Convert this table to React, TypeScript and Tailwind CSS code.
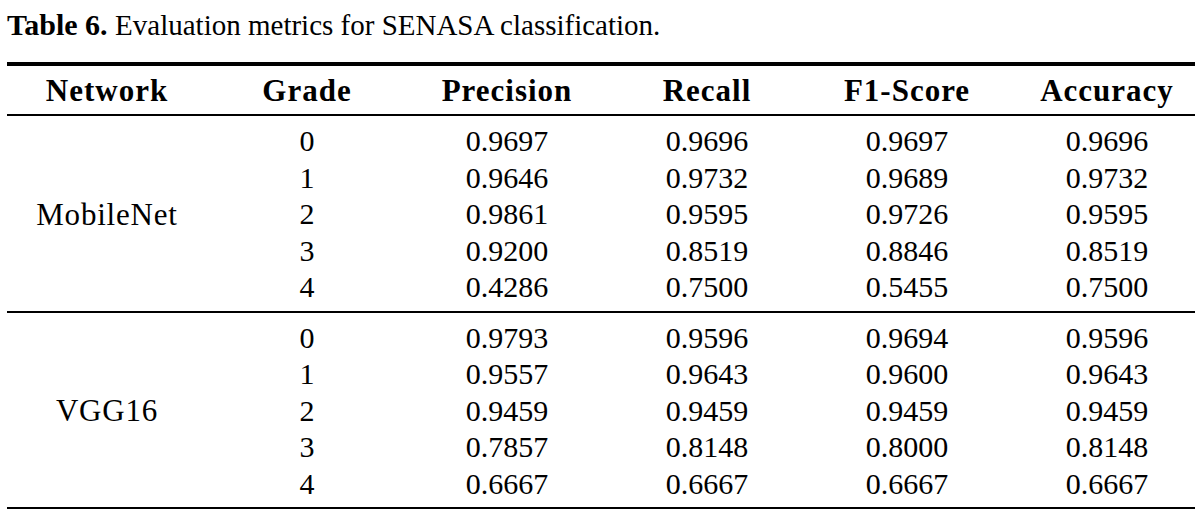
const rows = {
  MobileNet: [
    ['0', '0.9697', '0.9696', '0.9697', '0.9696'],
    ['1', '0.9646', '0.9732', '0.9689', '0.9732'],
    ['2', '0.9861', '0.9595', '0.9726', '0.9595'],
    ['3', '0.9200', '0.8519', '0.8846', '0.8519'],
    ['4', '0.4286', '0.7500', '0.5455', '0.7500'],
  ],
  VGG16: [
    ['0', '0.9793', '0.9596', '0.9694', '0.9596'],
    ['1', '0.9557', '0.9643', '0.9600', '0.9643'],
    ['2', '0.9459', '0.9459', '0.9459', '0.9459'],
    ['3', '0.7857', '0.8148', '0.8000', '0.8148'],
    ['4', '0.6667', '0.6667', '0.6667', '0.6667'],
  ],
};

const headers = ['Network', 'Grade', 'Precision', 'Recall', 'F1-Score', 'Accuracy'];

function Group({ name, data }: { name: string; data: string[][] }) {
  return (
    <div className="grid grid-cols-[repeat(6,200px)] pt-[7px] pb-[5px] border-b-[2px] border-black">
      <div className="row-span-5 flex items-center justify-center text-[31px] tracking-[0.8px]">{name}</div>
      {data.map((r) =>
        r.map((cell, i) => (
          <div key={`${r[0]}-${i}`} className="h-[36.5px] flex items-center justify-center">
            {cell}
          </div>
        ))
      )}
    </div>
  );
}

export default function App() {
  return (
    <div className="w-[1195px] h-[511px] overflow-hidden bg-white text-black font-['Liberation_Serif',serif] text-[30px] leading-none">
      <div className="pl-[7px] pt-[10px]">
        <p className="h-[52px]">
          <span className="font-bold">Table 6.</span>{' '}
          <span className="text-[29px]">Evaluation metrics for SENASA classification.</span>
        </p>
        <div className="w-[1200px]">
          <div className="grid grid-cols-[repeat(6,200px)] h-[54px] border-t-[4px] border-b-[2px] border-black font-bold text-[31px]">
            {headers.map((h) => (
              <div key={h} className="flex items-center justify-center tracking-[1px]">
                {h}
              </div>
            ))}
          </div>
          <Group name="MobileNet" data={rows.MobileNet} />
          <Group name="VGG16" data={rows.VGG16} />
        </div>
      </div>
    </div>
  );
}
